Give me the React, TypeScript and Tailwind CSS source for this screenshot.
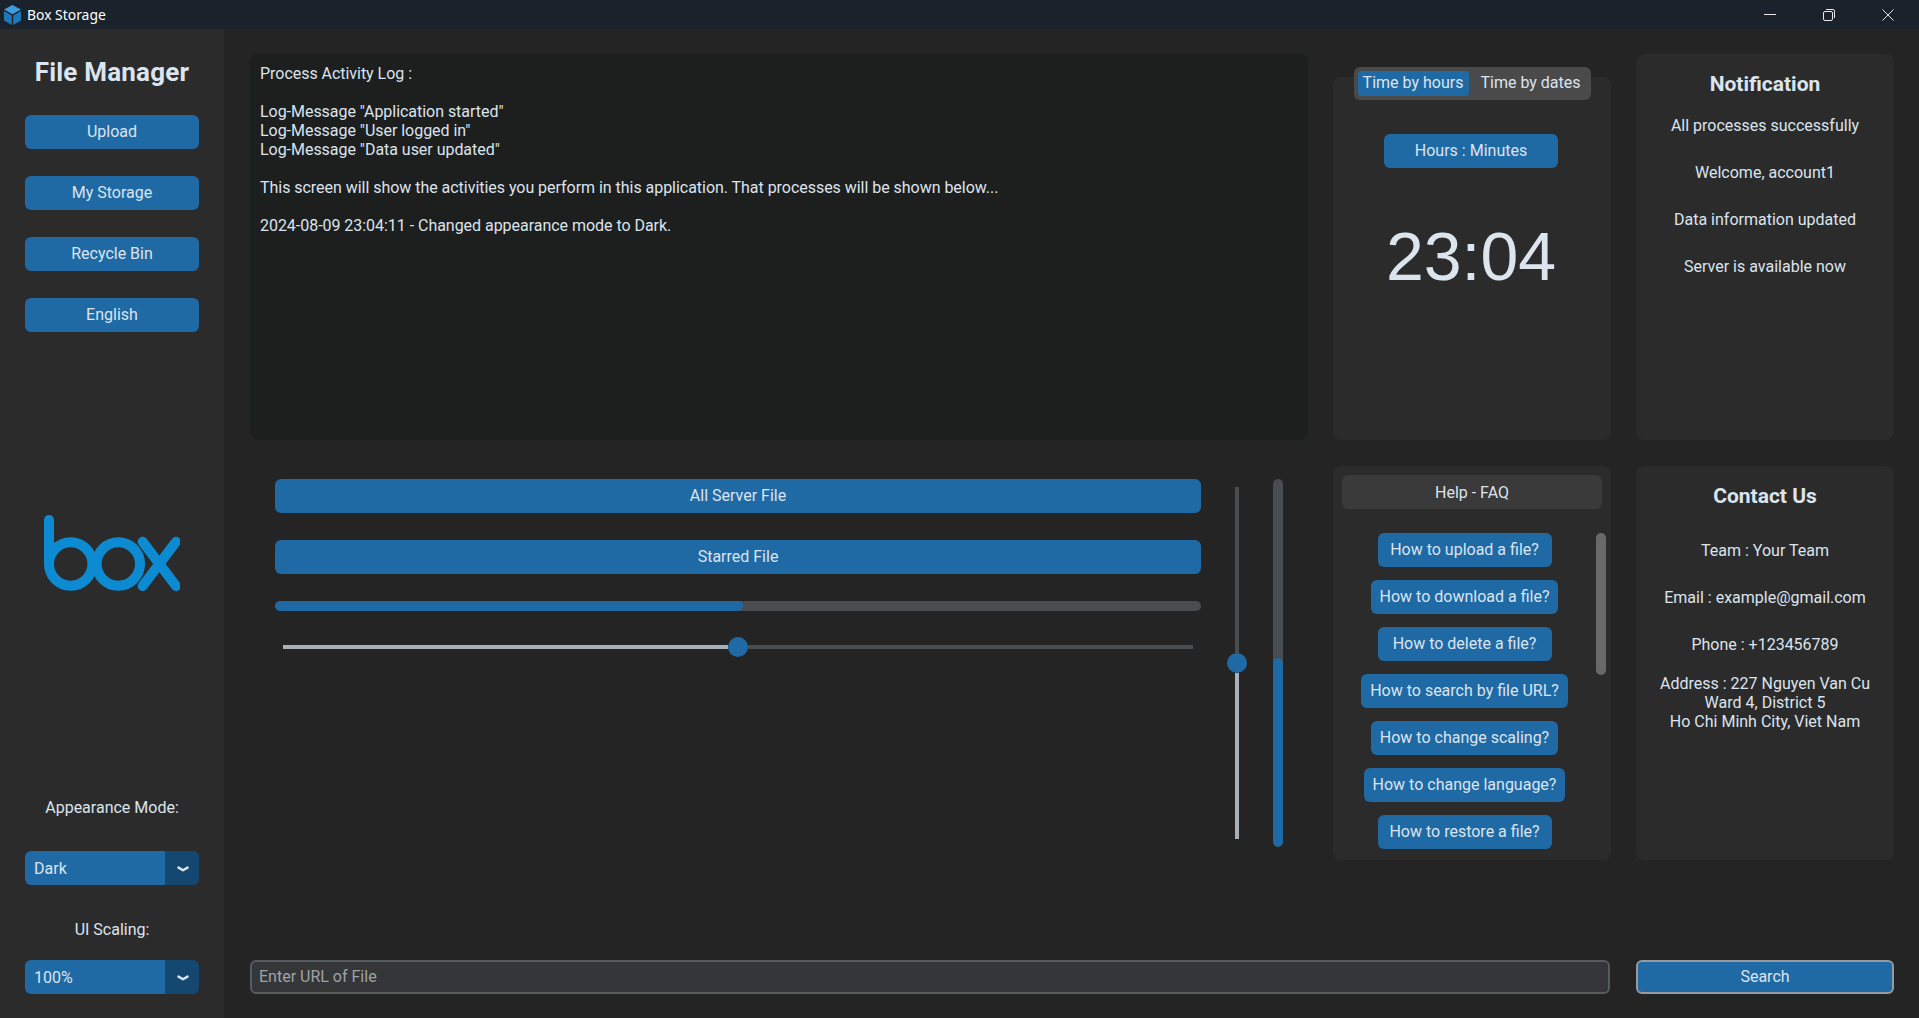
const FAQ_ITEMS = [
  'How to upload a file?',
  'How to download a file?',
  'How to delete a file?',
  'How to search by file URL?',
  'How to change scaling?',
  'How to change language?',
  'How to restore a file?',
]

const NAV_ITEMS = ['Upload', 'My Storage', 'Recycle Bin', 'English']

const NOTIFICATIONS = [
  'All processes successfully',
  'Welcome, account1',
  'Data information updated',
  'Server is available now',
]

function BlueButton({ label, className = '' }: { label: string; className?: string }) {
  return (
    <button className={`h-[34px] shrink-0 rounded-[6px] bg-[#1f6aa5] text-center text-[16px] leading-[34px] text-[#dce4ee] ${className}`}>
      {label}
    </button>
  )
}

function Dropdown({ value }: { value: string }) {
  return (
    <div className="flex h-[34px] w-[174px] shrink-0 overflow-hidden rounded-[6px] text-[16px] leading-[36px] text-[#dce4ee]">
      <div className="w-[140px] bg-[#1f6aa5] pl-[9px]">{value}</div>
      <div className="flex flex-1 items-center justify-center bg-[#144870]">
        <svg width="12" height="6" viewBox="0 0 12 6" fill="none" className="mt-[1px] ml-[1px]">
          <path d="M1.5 1.6 L6 4.2 L10.5 1.6" stroke="#dce4ee" strokeWidth="2.4" strokeLinecap="round" strokeLinejoin="round" />
        </svg>
      </div>
    </div>
  )
}

function TitleBar() {
  return (
    <div className="flex h-[29px] shrink-0 items-center bg-[#1a222c] pl-[4px] text-white">
      <svg width="17" height="20" viewBox="0 0 17 20" className="mt-[1px]">
        <polygon points="8.5,0 17,4.6 8.5,9.2 0,4.6" fill="#3f9bdb" />
        <polygon points="0,6 7.8,10.4 7.8,20 0,15.6" fill="#1f78b8" />
        <polygon points="17,6 9.2,10.4 9.2,20 17,15.6" fill="#1f78b8" />
      </svg>
      <span className="ml-[6px] font-['Noto_Sans',sans-serif] text-[13.9px] leading-[29px]">Box Storage</span>
      <div className="ml-auto flex items-center pr-[25px]">
        <svg width="12" height="2" viewBox="0 0 12 2">
          <rect width="12" height="1" fill="#e8e8e8" />
        </svg>
        <svg width="12" height="12" viewBox="0 0 12 12" fill="none" className="ml-[47px]">
          <rect x="0.5" y="2.5" width="9" height="9" rx="1.5" stroke="#e8e8e8" />
          <path d="M3 0.5 H10 A1.5 1.5 0 0 1 11.5 2 V9" stroke="#e8e8e8" />
        </svg>
        <svg width="12" height="12" viewBox="0 0 12 12" fill="none" className="ml-[47px]">
          <path d="M0.5 0.5 L11.5 11.5 M11.5 0.5 L0.5 11.5" stroke="#e8e8e8" />
        </svg>
      </div>
    </div>
  )
}

function BoxLogo() {
  return (
    <svg width="136" height="76" viewBox="0 0 136 76" fill="none" stroke="#0c8bd3" strokeWidth="10" strokeLinecap="round">
      <path d="M5 5 V49" />
      <circle cx="26.7" cy="49" r="21.7" />
      <circle cx="74.3" cy="49" r="21.7" />
      <path d="M98.7 26.7 L132 71 M132 26.7 L98.7 71" />
    </svg>
  )
}

function Sidebar() {
  return (
    <div className="flex w-[224px] shrink-0 flex-col items-center bg-[#2b2b2b] pb-[24px]">
      <h1 className="mt-[26px] h-[34px] text-[26px] leading-[34px] font-bold tracking-[0.2px] text-[#dce4ee]">File Manager</h1>
      <div className="mt-[26px] flex flex-col gap-[27px]">
        {NAV_ITEMS.map((item) => (
          <BlueButton key={item} label={item} className="w-[174px]" />
        ))}
      </div>
      <div className="mt-[183px]">
        <BoxLogo />
      </div>
      <div className="mt-auto h-[20px] text-[16px] leading-[20px]">Appearance Mode:</div>
      <div className="mt-[33px]">
        <Dropdown value="Dark" />
      </div>
      <div className="mt-[34px] h-[20px] text-[16px] leading-[22px]">UI Scaling:</div>
      <div className="mt-[21px]">
        <Dropdown value="100%" />
      </div>
    </div>
  )
}

function LogPanel() {
  return (
    <div className="h-full w-[1058px] shrink-0 rounded-[8px] bg-[#1d1e1e] px-[10px] pt-[10px] text-[16px] leading-[19px] tracking-[-0.035px] text-[#dce4ee]">
      <p>Process Activity Log :</p>
      <br />
      <p>Log-Message "Application started"</p>
      <p>Log-Message "User logged in"</p>
      <p>Log-Message "Data user updated"</p>
      <br />
      <p>This screen will show the activities you perform in this application. That processes will be shown below...</p>
      <br />
      <p>2024-08-09 23:04:11 - Changed appearance mode to Dark.</p>
    </div>
  )
}

function TimePanel() {
  return (
    <div className="mt-[23px] flex h-[363px] w-[278px] shrink-0 flex-col items-center rounded-[8px] bg-[#2b2b2b]">
      <div className="-mt-[10px] flex h-[33px] w-[237px] items-center rounded-[6px] bg-[#4a4a4a] pl-[4px] text-[16px] text-[#dce4ee]">
        <div className="h-[25px] w-[111px] rounded-[4px] bg-[#1f6aa5] text-center leading-[23px]">Time by hours</div>
        <div className="h-[25px] flex-1 pl-[2px] text-center leading-[23px]">Time by dates</div>
      </div>
      <BlueButton label="Hours : Minutes" className="mt-[34px] mr-[2px] w-[174px]" />
      <div className="mt-[46px] mr-[2px] h-[84px] font-['Liberation_Sans',sans-serif] text-[68px] leading-[84px] text-[#dce4ee]">23:04</div>
    </div>
  )
}

function InfoPanel({ children, className = '' }: { children: React.ReactNode; className?: string }) {
  return (
    <div className={`flex h-full w-[258px] shrink-0 flex-col items-center rounded-[8px] bg-[#2b2b2b] text-center text-[16px] text-[#dce4ee] ${className}`}>
      {children}
    </div>
  )
}

function ControlsArea() {
  return (
    <div className="flex w-[1058px] shrink-0 pl-[25px]">
      <div className="w-[926px] shrink-0 pt-[13px]">
        <BlueButton label="All Server File" className="w-full" />
        <BlueButton label="Starred File" className="mt-[27px] w-full" />
        <div className="mt-[27px] h-[10px] overflow-hidden rounded-[5px] bg-[#4a4d50]">
          <div className="h-full w-[468px] rounded-[5px] bg-[#1f6aa5]" />
        </div>
        <div className="mt-[26px] flex h-[20px] items-center px-[8px]">
          <div className="h-[4px] flex-1 bg-[#aab0b5]" />
          <div className="h-[20px] w-[20px] rounded-full bg-[#1f6aa5]" />
          <div className="h-[4px] flex-1 bg-[#4a4d50]" />
        </div>
      </div>
      <div className="ml-[26px] flex w-[20px] flex-col items-center pt-[21px]">
        <div className="h-[166px] w-[4px] bg-[#4a4d50]" />
        <div className="h-[20px] w-[20px] shrink-0 rounded-full bg-[#1f6aa5]" />
        <div className="h-[166px] w-[4px] bg-[#aab0b5]" />
      </div>
      <div className="mt-[13px] ml-[26px] flex h-[368px] w-[10px] flex-col overflow-hidden rounded-[5px] bg-[#4a4d50]">
        <div className="mt-[179px] flex-1 rounded-[5px] bg-[#1f6aa5]" />
      </div>
    </div>
  )
}

function FaqPanel() {
  return (
    <div className="h-full w-[278px] shrink-0 rounded-[8px] bg-[#2b2b2b] px-[9px] pt-[9px] text-[16px] text-[#dce4ee]">
      <div className="h-[34px] rounded-[6px] bg-[#3a3a3a] text-center leading-[36px]">Help - FAQ</div>
      <div className="mt-[24px] flex">
        <div className="flex w-[245px] shrink-0 flex-col items-center gap-[13px]">
          {FAQ_ITEMS.map((item) => (
            <BlueButton key={item} label={item} className="min-w-[174px] px-[9px]" />
          ))}
        </div>
        <div className="ml-[9px] h-[142px] w-[10px] shrink-0 rounded-[5px] bg-[#696969]" />
      </div>
    </div>
  )
}

export default function App() {
  return (
    <div className="flex h-[1018px] w-[1919px] flex-col overflow-hidden bg-[#242424] font-['Roboto',sans-serif] text-[#dce4ee]">
      <TitleBar />
      <div className="flex min-h-0 flex-1">
        <Sidebar />
        <div className="flex flex-1 flex-col pt-[25px] pr-[25px] pb-[24px] pl-[26px]">
          <div className="flex h-[386px] gap-[25px]">
            <LogPanel />
            <TimePanel />
            <InfoPanel>
              <h2 className="mt-[18px] h-[24px] text-[21px] leading-[24px] font-bold">Notification</h2>
              <div className="mt-[20px] flex flex-col gap-[27px] leading-[20px]">
                {NOTIFICATIONS.map((line) => (
                  <p key={line}>{line}</p>
                ))}
              </div>
            </InfoPanel>
          </div>
          <div className="mt-[26px] flex h-[394px] gap-[25px]">
            <ControlsArea />
            <FaqPanel />
            <InfoPanel>
              <h2 className="mt-[18px] h-[24px] text-[21px] leading-[24px] font-bold">Contact Us</h2>
              <div className="mt-[33px] flex flex-col gap-[27px] leading-[20px]">
                <p>Team : Your Team</p>
                <p>Email : example@gmail.com</p>
                <p>Phone : +123456789</p>
              </div>
              <p className="mt-[19px] leading-[19px]">
                Address : 227 Nguyen Van Cu
                <br />
                Ward 4, District 5
                <br />
                Ho Chi Minh City, Viet Nam
              </p>
            </InfoPanel>
          </div>
          <div className="mt-auto flex h-[34px] gap-[26px]">
            <input
              placeholder="Enter URL of File"
              className="h-[34px] w-[1360px] rounded-[6px] border-2 border-[#565b5e] bg-[#343638] px-[7px] pb-[1px] text-[16px] text-[#dce4ee] outline-none placeholder:text-[#9ea3a8]"
            />
            <button className="h-[34px] w-[258px] rounded-[6px] border-2 border-[#949a9f] bg-[#1f6aa5] text-[16px] text-[#dce4ee]">
              Search
            </button>
          </div>
        </div>
      </div>
    </div>
  )
}
